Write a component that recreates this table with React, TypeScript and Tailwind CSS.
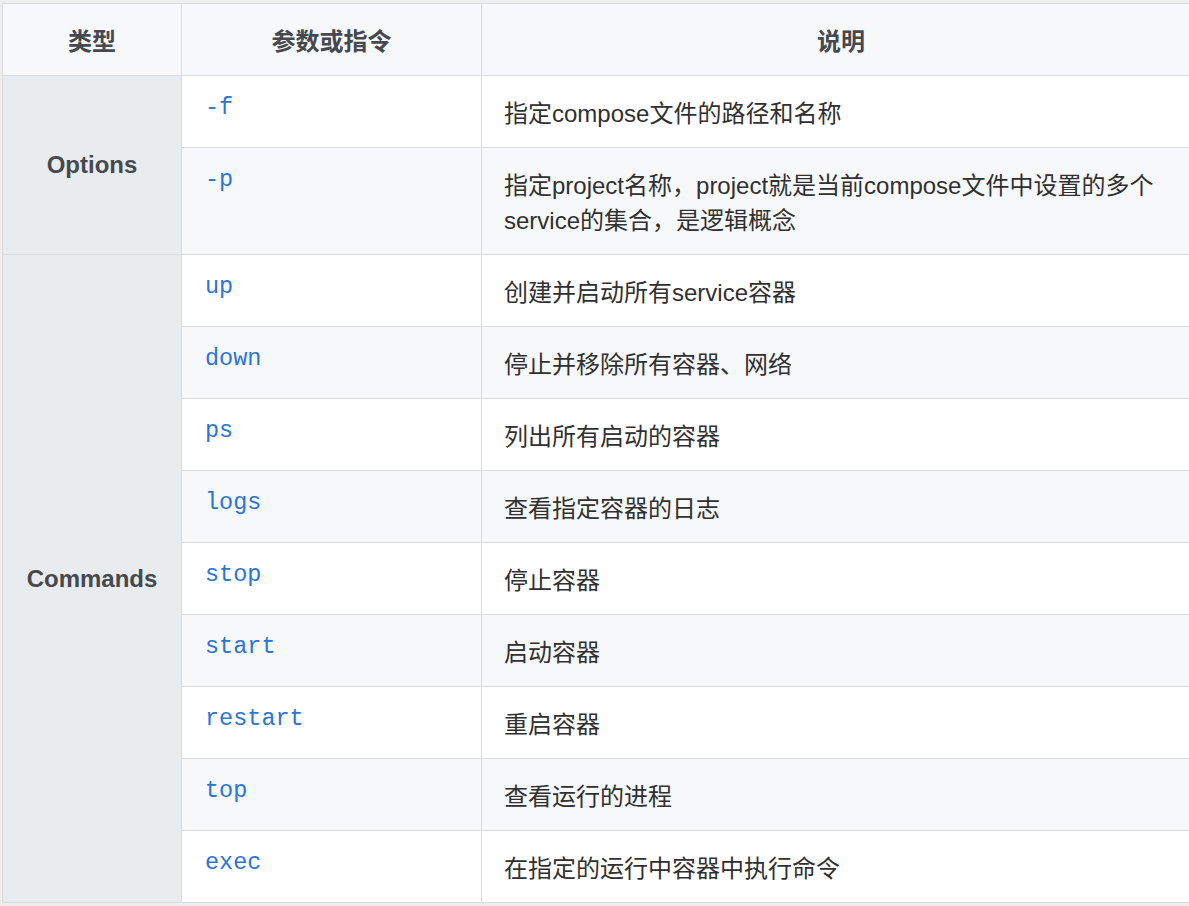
const options = [
  { code: "-f", desc: "指定compose文件的路径和名称" },
  { code: "-p", desc: "指定project名称，project就是当前compose文件中设置的多个service的集合，是逻辑概念" },
];

const commands = [
  { code: "up", desc: "创建并启动所有service容器" },
  { code: "down", desc: "停止并移除所有容器、网络" },
  { code: "ps", desc: "列出所有启动的容器" },
  { code: "logs", desc: "查看指定容器的日志" },
  { code: "stop", desc: "停止容器" },
  { code: "start", desc: "启动容器" },
  { code: "restart", desc: "重启容器" },
  { code: "top", desc: "查看运行的进程" },
  { code: "exec", desc: "在指定的运行中容器中执行命令" },
];

const sans = "font-['Liberation_Sans','Noto_Sans_CJK_SC',sans-serif]";
const cell = "border border-[#dcdcdc]";
const codeCell = `${cell} align-top pl-[23px] pr-6 pt-[14px] pb-[18px]`;
const descCell = `${cell} align-top pl-[22px] pr-6 pt-[20px] pb-[16px] text-[24px] leading-[35px] text-[#303030]`;
const codeClass = "font-['Liberation_Mono',monospace] text-[23.5px] leading-[35px] text-[#2b74d8]";
const groupCell = `${cell} bg-[#e9ecef] text-center align-middle text-[24px] font-bold text-[#45494e]`;

function Row({ code, desc, striped, group }: { code: string; desc: string; striped: boolean; group?: { label: string; span: number } }) {
  return (
    <tr className={striped ? "bg-[#f6f8fa]" : "bg-white"}>
      {group ? <td rowSpan={group.span} className={groupCell}>{group.label}</td> : null}
      <td className={codeCell}><span className={codeClass}>{code}</span></td>
      <td className={descCell}>{desc}</td>
    </tr>
  );
}

export default function App() {
  let i = 0;
  return (
    <div className={`min-h-[906px] w-[1189px] overflow-hidden bg-[#eeeeee] pl-[2px] pt-[3px] ${sans}`}>
      <table className="w-[1199px] table-fixed border-collapse">
        <colgroup>
          <col className="w-[179px]" />
          <col className="w-[300px]" />
          <col />
        </colgroup>
        <thead>
          <tr className="bg-[#f6f8fa] text-[24px] font-bold text-[#45494e]">
            <th className={`${cell} h-[72px] pt-[4px] text-center`}>类型</th>
            <th className={`${cell} pt-[4px] text-center`}>参数或指令</th>
            <th className={`${cell} pt-[4px] text-center`}>说明</th>
          </tr>
        </thead>
        <tbody>
          {options.map((o, idx) => (
            <Row key={o.code} {...o} striped={i++ % 2 === 1} group={idx === 0 ? { label: "Options", span: options.length } : undefined} />
          ))}
          {commands.map((c, idx) => (
            <Row key={c.code} {...c} striped={i++ % 2 === 1} group={idx === 0 ? { label: "Commands", span: commands.length } : undefined} />
          ))}
        </tbody>
      </table>
    </div>
  );
}
